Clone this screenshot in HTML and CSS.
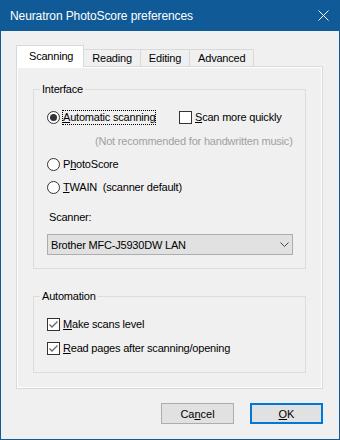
FILE: index.html
```html
<!DOCTYPE html>
<html lang="en">

<head>
    <meta charset="UTF-8">
    <meta name="viewport" content="width=device-width, initial-scale=1.0">
    <title>Neuratron PhotoScore preferences</title>
    <link rel="stylesheet" href="styles.css">
</head>

<body>
    <div class="window">
        <div class="titlebar">
            <span class="title">Neuratron PhotoScore preferences</span>
            <svg class="close" width="11" height="11" viewBox="0 0 11 11">
                <path d="M0.5 0.5L10.5 10.5M10.5 0.5L0.5 10.5" stroke="#fff" stroke-width="1" fill="none" />
            </svg>
        </div>
        <div class="content">
            <ul class="tabs">
                <li class="active">Scanning</li>
                <li>Reading</li>
                <li>Editing</li>
                <li>Advanced</li>
            </ul>
            <div class="panel">
                <!-- Interface -->
                <fieldset class="group">
                    <legend>Interface</legend>
                    <div class="group-body">
                        <div class="row">
                            <label class="option option-main">
                                <span class="radio checked"></span>
                                <span class="focus"><u>A</u>utomatic scanning</span>
                            </label>
                            <label class="option">
                                <span class="check"></span>
                                <span class="text"><u>S</u>can more quickly</span>
                            </label>
                        </div>
                        <div class="note">(Not recommended for handwritten music)</div>
                        <label class="option spaced">
                            <span class="radio"></span>
                            <span class="text">P<u>h</u>otoScore</span>
                        </label>
                        <label class="option spaced">
                            <span class="radio"></span>
                            <span class="text"><u>T</u>WAIN&nbsp; (scanner default)</span>
                        </label>
                        <div class="field-label">Scanner:</div>
                        <div class="select">
                            <span>Brother MFC-J5930DW LAN</span>
                            <svg width="9" height="5" viewBox="0 0 9 5">
                                <path d="M0.5 0.5L4.5 4.5L8.5 0.5" stroke="#444" stroke-width="1" fill="none" />
                            </svg>
                        </div>
                    </div>
                </fieldset>

                <!-- Automation -->
                <fieldset class="group group-auto">
                    <legend>Automation</legend>
                    <div class="group-body">
                        <label class="option">
                            <span class="check">
                                <svg width="11" height="11" viewBox="0 0 11 11">
                                    <path d="M1.5 5.5L4 8L9.5 2.5" stroke="#666" stroke-width="1.3" fill="none" />
                                </svg>
                            </span>
                            <span class="text"><u>M</u>ake scans level</span>
                        </label>
                        <label class="option spaced-more">
                            <span class="check">
                                <svg width="11" height="11" viewBox="0 0 11 11">
                                    <path d="M1.5 5.5L4 8L9.5 2.5" stroke="#666" stroke-width="1.3" fill="none" />
                                </svg>
                            </span>
                            <span class="text"><u>R</u>ead pages after scanning/opening</span>
                        </label>
                    </div>
                </fieldset>
            </div>
            <div class="buttons">
                <button class="btn">Ca<u>n</u>cel</button>
                <button class="btn btn-default"><u>O</u>K</button>
            </div>
        </div>
    </div>
</body>

</html>
```

FILE: styles.css
```css
body,
ul,
li {
    margin: 0;
    padding: 0;
    list-style: none;
}

body {
    background: #f0f0f0;
    font-family: "Liberation Sans", Arial, sans-serif;
    font-size: 11px;
    letter-spacing: -0.2px;
    color: #000;
}

u {
    text-decoration: underline;
    text-underline-offset: 1px;
}

.window {
    width: 340px;
    height: 440px;
    box-sizing: border-box;
    border: 1px solid #105b97;
    border-top: 0;
    display: flex;
    flex-direction: column;
}

.titlebar {
    height: 31px;
    margin: 0 -1px;
    padding: 0 11px 0 10px;
    background: #105b97;
    color: #fff;
    font-size: 12px;
    letter-spacing: -0.1px;
    display: flex;
    align-items: center;
    justify-content: space-between;
}

.content {
    padding: 14px 16px 0 15px;
}

/* tabs */
.tabs {
    display: flex;
    align-items: flex-end;
    height: 21px;
    position: relative;
    z-index: 1;
}

.tabs li {
    box-sizing: border-box;
    height: 17px;
    line-height: 16px;
    padding: 0 8px;
    border: 1px solid #d9d9d9;
    border-bottom: 0;
    background: #f0f0f0;
}

.tabs li + li {
    margin-left: -1px;
}

.tabs li.active {
    height: 22px;
    line-height: 20px;
    padding: 0 10px 0 12px;
    margin-bottom: -1px;
    background: #fff;
    position: relative;
    z-index: 2;
}

.panel {
    box-sizing: border-box;
    height: 323px;
    border: 1px solid #d9d9d9;
    box-shadow: inset 0 0 0 1px #fff;
    padding: 15px 16px 0;
}

/* group boxes */
.group {
    margin: 0;
    padding: 0;
    border: 1px solid #dcdcdc;
    min-width: 0;
}

.group legend {
    margin-left: 6px;
    padding: 0 2px;
    line-height: 14px;
}

.group-auto {
    margin-top: 20px;
}

.group-body {
    padding: 15px 13px 13px;
    display: flex;
    flex-direction: column;
}

.group-auto .group-body {
    padding-bottom: 17px;
}

.row {
    display: flex;
}

.option {
    display: flex;
    align-items: center;
    height: 13px;
    line-height: 13px;
    white-space: nowrap;
}

.option-main {
    width: 132px;
}

.option .text {
    margin-left: 3px;
}

.option .focus {
    margin-left: 2px;
    border: 1px dotted #000;
    line-height: 13px;
}

.spaced {
    margin-top: 10px;
}

.spaced-more {
    margin-top: 11px;
}

.radio {
    box-sizing: border-box;
    width: 13px;
    height: 13px;
    border: 1px solid #333;
    border-radius: 50%;
    background: #fff;
    display: flex;
    align-items: center;
    justify-content: center;
    flex-shrink: 0;
}

.radio.checked::after {
    content: "";
    width: 7px;
    height: 7px;
    border-radius: 50%;
    background: #333;
}

.check {
    box-sizing: border-box;
    width: 13px;
    height: 13px;
    border: 1px solid #333;
    background: #fff;
    display: flex;
    flex-shrink: 0;
}

.note {
    margin-top: 10px;
    padding-left: 48px;
    line-height: 14px;
    color: #a0a0a0;
    white-space: nowrap;
}

.field-label {
    margin-top: 17px;
    padding-left: 2px;
    line-height: 13px;
}

.select {
    margin-top: 10px;
    margin-right: -1px;
    box-sizing: border-box;
    height: 21px;
    border: 1px solid #adadad;
    background: #e1e1e1;
    padding: 0 3px 0 3px;
    display: flex;
    align-items: center;
    justify-content: space-between;
}

/* buttons */
.buttons {
    display: flex;
    justify-content: flex-end;
    gap: 16px;
    margin-top: 14px;
}

.btn {
    box-sizing: border-box;
    width: 73px;
    height: 21px;
    padding: 0;
    border: 1px solid #adadad;
    background: #e1e1e1;
    font: inherit;
    color: #000;
}

.btn-default {
    border: 2px solid #0078d7;
}
```
